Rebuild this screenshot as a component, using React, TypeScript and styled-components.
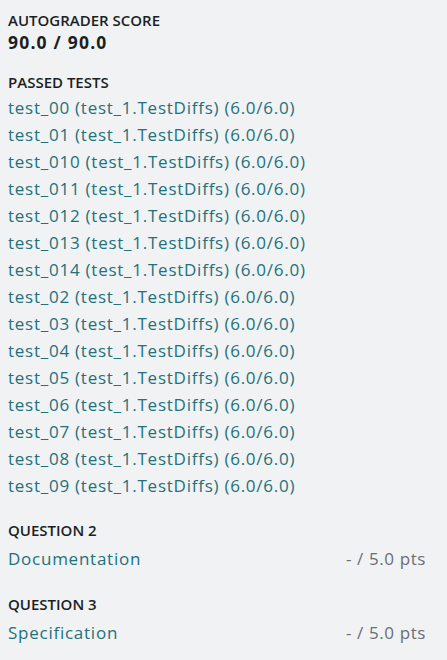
import styled, {createGlobalStyle} from 'styled-components'

const GlobalStyle = createGlobalStyle`
  html, body {
    margin: 0;
    padding: 0;
    background: #f1f2f4;
  }
  body {
    font-family: "Open Sans", Lato, sans-serif;
    color: #1e2226;
  }
`

const tests = [
  '00', '01', '010', '011', '012', '013', '014',
  '02', '03', '04', '05', '06', '07', '08', '09',
]

const questions = [
  {label: 'QUESTION 2', name: 'Documentation'},
  {label: 'QUESTION 3', name: 'Specification'},
]

export default function App() {
  return (
    <>
      <GlobalStyle />
      <Sidebar>
        <Section>
          <Label>AUTOGRADER SCORE</Label>
          <Score>90.0 / 90.0</Score>
        </Section>

        <Section $padBottom={2}>
          <Label>PASSED TESTS</Label>
          <TestList>
            {tests.map((t) => (
              <TestLink key={t} href="#">
                test_{t} (test_1.TestDiffs) (6.0/6.0)
              </TestLink>
            ))}
          </TestList>
        </Section>

        {questions.map((q) => (
          <Section key={q.label} $padBottom={3}>
            <Label>{q.label}</Label>
            <QuestionRow>
              <TestLink href="#">{q.name}</TestLink>
              <Points>- / 5.0 pts</Points>
            </QuestionRow>
          </Section>
        ))}
      </Sidebar>
    </>
  )
}

const Sidebar = styled.aside`
  display: flex;
  flex-direction: column;
  gap: 19px;
  width: 447px;
  height: 660px;
  box-sizing: border-box;
  padding: 10px 21px 0 8px;
  background: #f1f2f4;
`

const Section = styled.section<{$padBottom?: number}>`
  display: flex;
  flex-direction: column;
  padding-bottom: ${(p) => p.$padBottom ?? 0}px;
`

const Label = styled.div`
  font-size: 15px;
  font-weight: 600;
  line-height: 20px;
  color: #1b1f23;
`

const Score = styled.div`
  margin-top: 1px;
  font-size: 17.5px;
  font-weight: 700;
  line-height: 22px;
  letter-spacing: 1.2px;
  color: #1b1f23;
`

const TestList = styled.div`
  display: flex;
  flex-direction: column;
  padding-top: 2px;
`

const TestLink = styled.a`
  font-size: 17px;
  line-height: 27px;
  letter-spacing: 0.75px;
  color: #22717b;
  text-decoration: none;
`

const QuestionRow = styled.div`
  display: flex;
  justify-content: space-between;
  align-items: baseline;
  margin-top: 5px;
`

const Points = styled.span`
  font-size: 17px;
  line-height: 27px;
  letter-spacing: 0.6px;
  color: #6b6e73;
`
